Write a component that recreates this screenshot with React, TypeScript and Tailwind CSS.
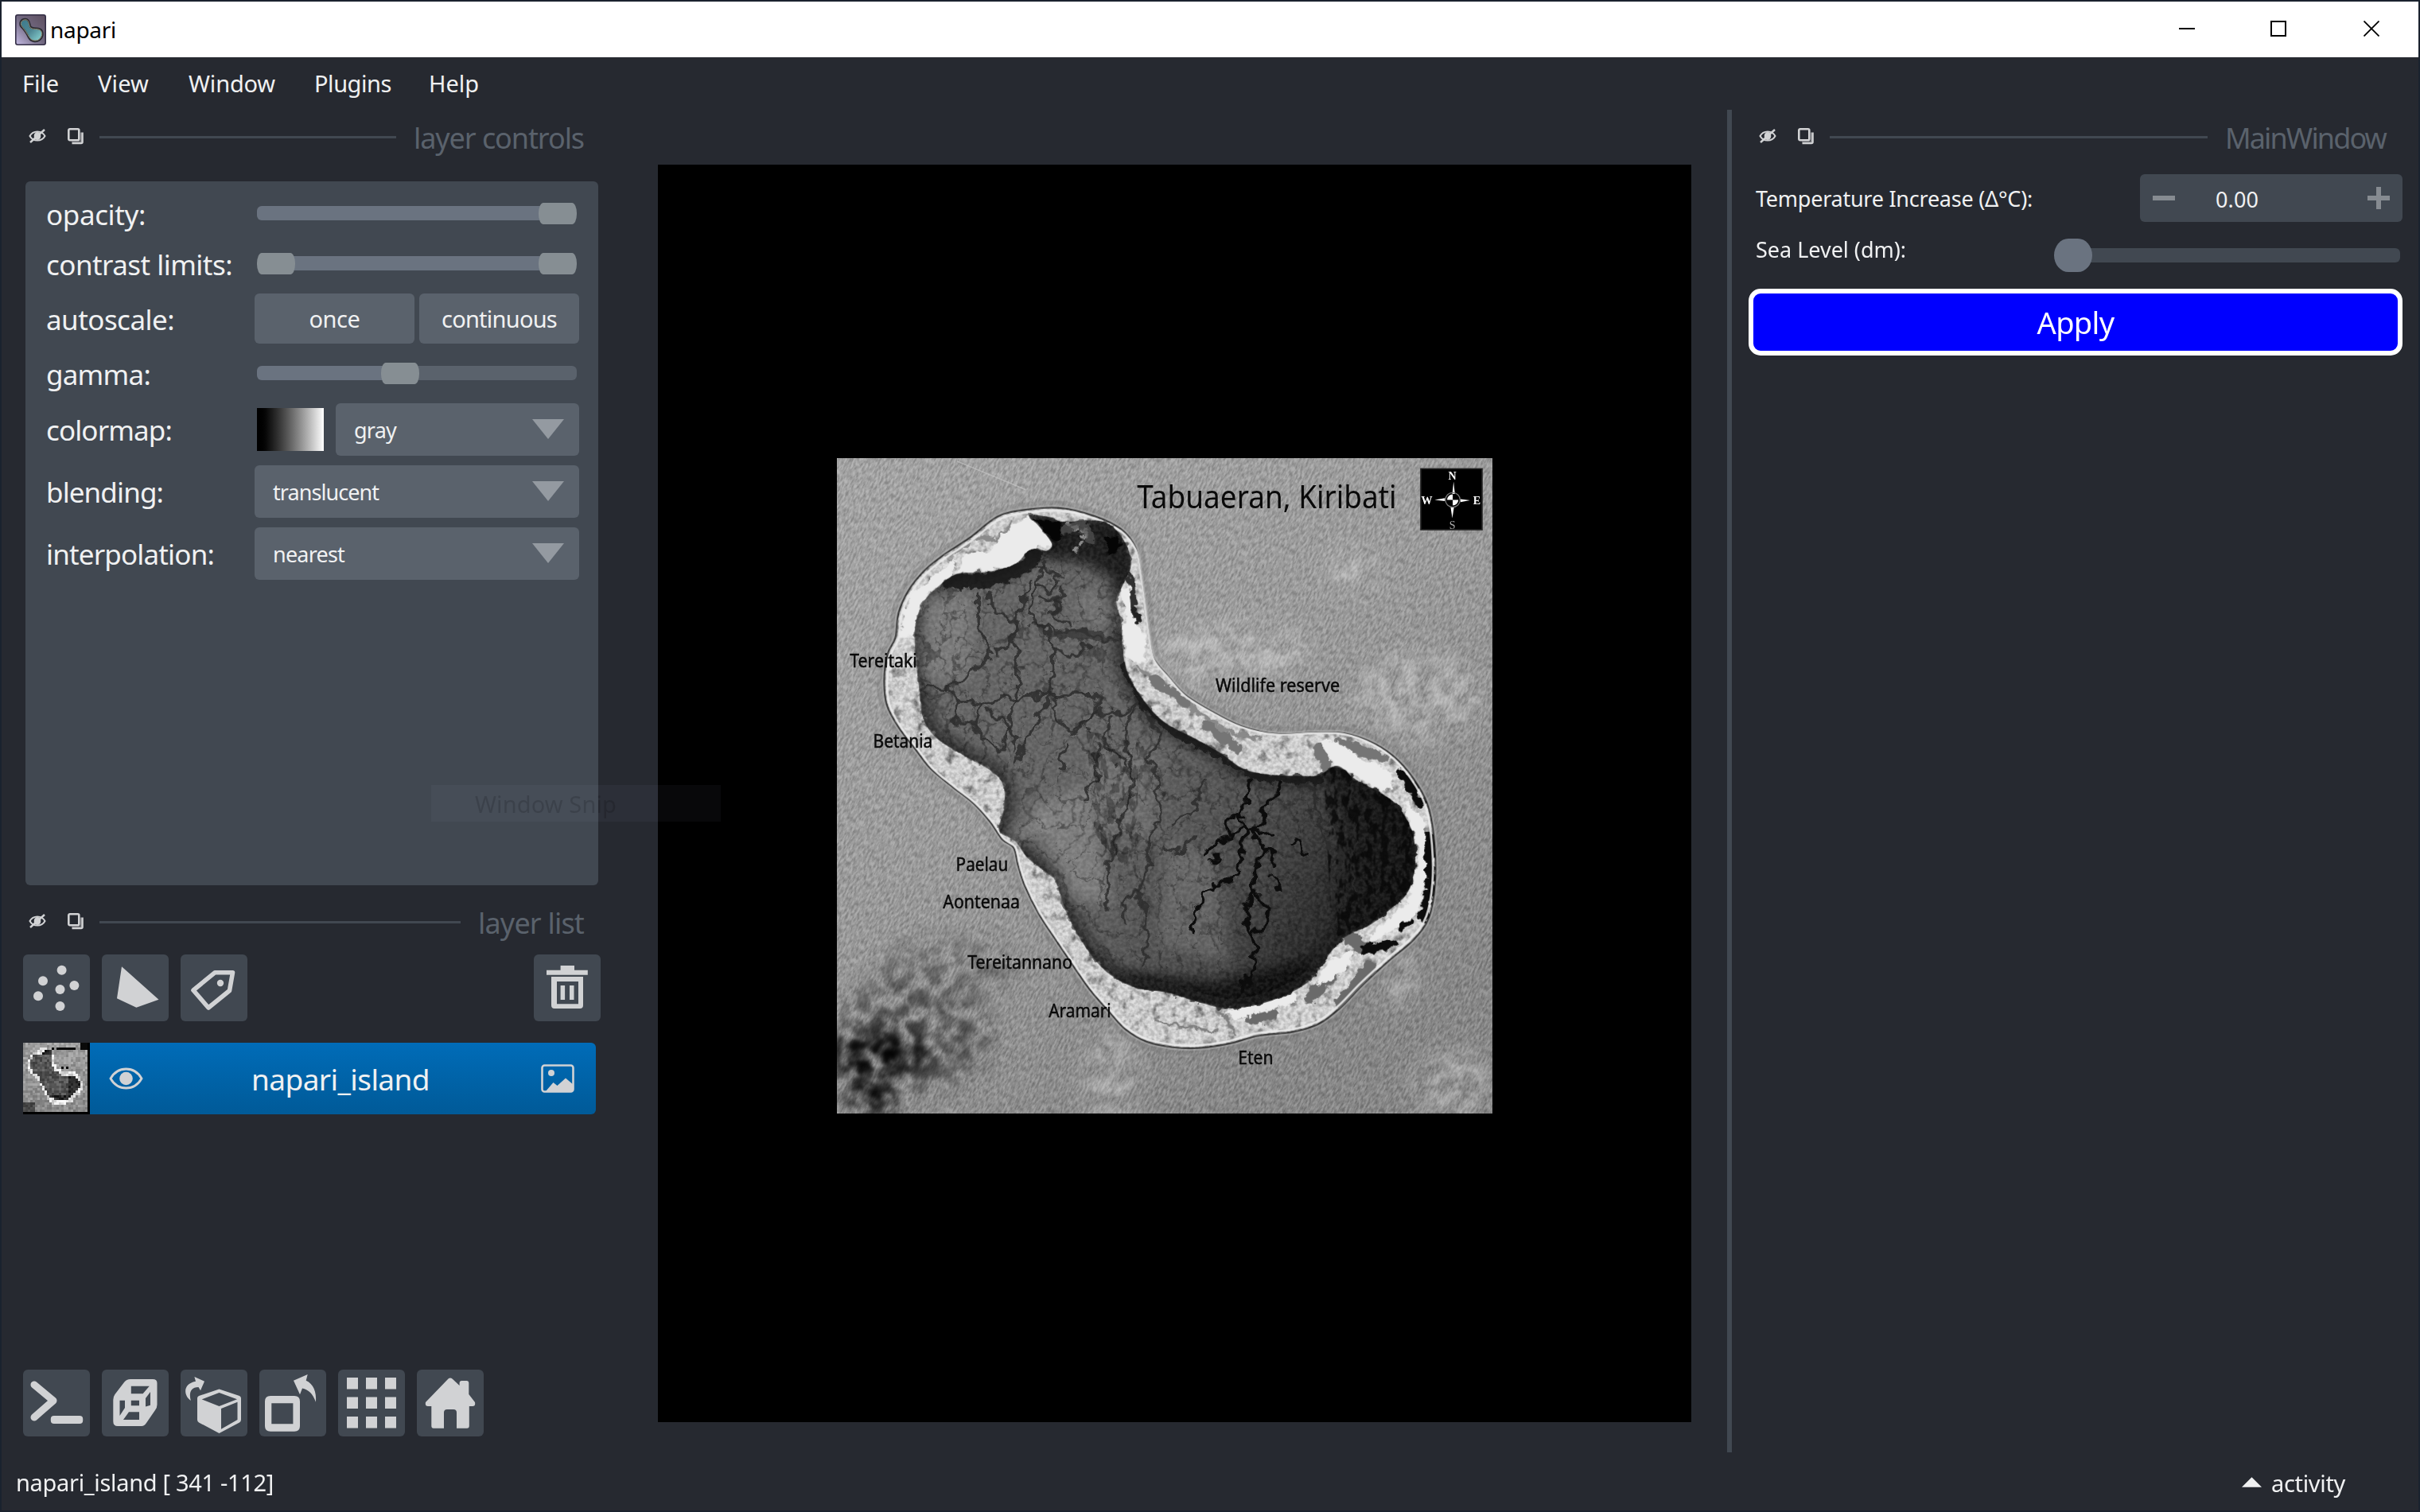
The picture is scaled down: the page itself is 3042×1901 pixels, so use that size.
import { useLayoutEffect, useRef, useState, type ReactNode } from "react";

type Pt = [number, number];

/** Text whose letter spacing is tuned so that the run fills the given width. */
function FitText({ children, width, className = "" }: { children: string; width: number; className?: string }) {
  const ref = useRef<HTMLSpanElement>(null);
  const [spacing, setSpacing] = useState(0);
  useLayoutEffect(() => {
    const natural = ref.current?.getBoundingClientRect().width ?? width;
    setSpacing((width - natural) / children.length);
  }, [children, width]);
  return (
    <span ref={ref} className={"inline-block whitespace-pre " + className} style={{ letterSpacing: spacing }}>
      {children}
    </span>
  );
}

/** Closed Catmull-Rom spline through the points. */
function smooth(pts: Pt[]): string {
  const n = pts.length;
  let d = `M${pts[0][0]} ${pts[0][1]}`;
  for (let i = 0; i < n; i++) {
    const p0 = pts[(i - 1 + n) % n];
    const p1 = pts[i];
    const p2 = pts[(i + 1) % n];
    const p3 = pts[(i + 2) % n];
    d += `C${p1[0] + (p2[0] - p0[0]) / 6} ${p1[1] + (p2[1] - p0[1]) / 6} ${p2[0] - (p3[0] - p1[0]) / 6} ${p2[1] - (p3[1] - p1[1]) / 6} ${p2[0]} ${p2[1]}`;
  }
  return d + "Z";
}

function inside(x: number, y: number, poly: Pt[]): boolean {
  let hit = false;
  for (let i = 0, j = poly.length - 1; i < poly.length; j = i++) {
    const [xi, yi] = poly[i];
    const [xj, yj] = poly[j];
    if (yi > y !== yj > y && x < ((xj - xi) * (y - yi)) / (yj - yi) + xi) hit = !hit;
  }
  return hit;
}

const COAST: Pt[] = [
  [460, 132], [395, 148], [330, 198], [270, 238], [225, 275], [188, 322], [165, 375], [158, 432], [140, 470],
  [132, 530], [138, 590], [165, 642], [205, 695], [240, 740], [290, 782], [340, 822], [378, 865], [405, 905],
  [432, 925], [442, 965], [458, 1015], [490, 1080], [530, 1142], [570, 1202], [610, 1260], [655, 1312],
  [692, 1352], [740, 1380], [800, 1393], [860, 1395], [930, 1385], [1000, 1366], [1080, 1357], [1140, 1338],
  [1190, 1300], [1240, 1248], [1300, 1192], [1360, 1140], [1395, 1088], [1409, 1010], [1408, 920], [1395, 835],
  [1370, 780], [1325, 722], [1270, 682], [1200, 657], [1130, 655], [1040, 658], [960, 640], [890, 605],
  [830, 567], [790, 523], [756, 480], [744, 420], [735, 350], [724, 270], [714, 220], [680, 177], [620, 147], [540, 128],
];

const LAGOON: Pt[] = [
  [203, 410], [222, 350], [262, 308], [305, 282], [370, 278], [435, 260], [470, 226], [510, 228], [520, 210],
  [490, 170], [468, 145], [520, 150], [545, 160], [640, 160], [688, 205], [704, 262], [682, 315], [670, 345],
  [682, 400], [684, 450], [696, 515], [730, 575], [780, 630], [850, 668], [910, 702], [960, 738], [1010, 752],
  [1090, 757], [1140, 755], [1182, 733], [1225, 765], [1285, 798], [1325, 830], [1358, 895], [1362, 970],
  [1345, 1030], [1310, 1065], [1260, 1105], [1200, 1135], [1160, 1180], [1125, 1230], [1080, 1262], [1010, 1290],
  [930, 1302], [860, 1287], [790, 1265], [720, 1255], [660, 1226], [618, 1185], [578, 1125], [550, 1065],
  [530, 1005], [510, 985], [465, 950], [436, 910], [398, 885], [410, 835], [408, 780], [380, 745], [310, 705],
  [250, 665], [222, 620], [214, 560], [206, 490],
];

const SOFT_CRACKS = [
  "M235 545 L270 548 L290 552 L300 580 L355 590 L390 578 L440 575 L515 565 L630 568 L620 610 L595 640 L575 655",
  "M350 330 L352 410 L375 460 L365 490 L330 520 L275 550",
  "M376 325 L385 370 L412 385 L430 400 L425 440 L385 480",
  "M300 585 L290 625 L340 640 L355 590 M340 640 L400 700 L420 640 L375 600",
  "M470 300 L455 340 L440 380 L430 430 L445 500 L440 560 L420 640 L440 690",
  "M500 260 L485 310 L470 380 L500 410 L520 450 L525 520 L515 570 L480 640 L455 690 L440 730",
  "M475 270 L500 265 L540 290 L520 320 L485 310",
  "M500 340 L530 335 L535 370 L505 380",
  "M475 395 L530 420 L575 410 L620 430 L680 440",
  "M545 320 L520 370 L560 400",
  "M525 460 L570 480 L600 450",
  "M530 565 L520 600 L560 650 L600 640 L620 605 L690 610 L720 590",
  "M700 520 L720 590 L690 640 L695 700 L715 770 L690 830 L670 900 L650 980 L650 1070",
  "M630 690 L620 760 L600 810",
  "M660 620 L640 680 L690 730",
  "M740 610 L775 660 L745 710 L770 780 L770 850 L745 900 L745 960 L720 1030 L685 1050 L690 1100",
  "M720 1030 L740 1090 L735 1200",
  "M555 680 L540 740",
  "M870 760 L850 830 L800 870",
  "M780 930 L820 935 L850 900",
  "M1100 775 L1135 800 L1140 870 L1170 940 L1160 1010 L1185 1060 L1180 1110",
  "M1180 780 L1170 860 L1200 930 L1190 1000 L1210 1080",
  "M1210 790 L1230 870 L1215 960 L1225 1030",
];

const HARD_CRACKS = [
  "M980 765 L968 830 L950 850 L970 890 L960 950 L945 990 L915 1005 L880 1030 L855 1075 L848 1125",
  "M1050 765 L1045 800 L1020 820 L1005 870 L985 890 L1015 920 L1000 950 L990 990 L988 1040 L970 1060 L980 1130 L990 1160 L985 1215 L960 1265",
  "M988 1040 L1022 1060 L1020 1095 L985 1135",
  "M968 845 L945 845 L920 880 L945 890 L900 915 L870 940",
  "M985 880 L950 890 M985 890 L1030 885 M1015 915 L1040 960",
  "M1075 910 L1090 910 L1105 935",
  "M1035 1000 L1055 1030",
  "M895 960 L905 945",
];

const PLACES: { name: string; x: number; y: number; w: number }[] = [
  { name: "Wildlife reserve", x: 901, y: 560, w: 288 },
  { name: "Tereitaki", x: 53, y: 502, w: 156 },
  { name: "Betania", x: 107, y: 690, w: 138 },
  { name: "Paelau", x: 299, y: 980, w: 121 },
  { name: "Aontenaa", x: 269, y: 1068, w: 178 },
  { name: "Tereitannano", x: 326, y: 1210, w: 243 },
  { name: "Aramari", x: 514, y: 1323, w: 145 },
  { name: "Eten", x: 953, y: 1433, w: 82 },
];

function IslandMap() {
  const coast = smooth(COAST);
  const lagoon = smooth(LAGOON);
  return (
    <svg className="h-[824px] w-[824px]" viewBox="22 11 1520 1538" preserveAspectRatio="none">
      <defs>
        <linearGradient id="sea" x1="0" y1="0" x2="0.6" y2="1">
          <stop offset="0" stopColor="#a6a6a6" />
          <stop offset="0.5" stopColor="#9b9b9b" />
          <stop offset="1" stopColor="#848484" />
        </linearGradient>
        <linearGradient id="water" x1="0" y1="0" x2="1" y2="0.5">
          <stop offset="0" stopColor="#666666" />
          <stop offset="0.55" stopColor="#656565" />
          <stop offset="0.8" stopColor="#4c4c4c" />
          <stop offset="1" stopColor="#262626" />
        </linearGradient>
        <filter id="waves" x="0" y="0" width="1" height="1" colorInterpolationFilters="sRGB">
          <feTurbulence type="fractalNoise" baseFrequency="0.22 0.08" numOctaves="3" seed="4" />
          <feColorMatrix values="2.2 0 0 0 -0.52  2.2 0 0 0 -0.52  2.2 0 0 0 -0.52  0 0 0 0 0.17" />
        </filter>
        <filter id="mottle" x="0" y="0" width="1" height="1" colorInterpolationFilters="sRGB">
          <feTurbulence type="fractalNoise" baseFrequency="0.04" numOctaves="5" seed="9" />
          <feColorMatrix values="0 0 0 0 0.45  0 0 0 0 0.45  0 0 0 0 0.45  3.5 0 0 0 -1.85" />
          <feComposite in2="SourceGraphic" operator="in" />
        </filter>
        <filter id="veins" x="0" y="0" width="1" height="1" colorInterpolationFilters="sRGB">
          <feTurbulence type="turbulence" baseFrequency="0.022 0.016" numOctaves="1" seed="23" />
          <feColorMatrix values="0 0 0 0 0.1  0 0 0 0 0.1  0 0 0 0 0.1  -18 0 0 0 1" result="v" />
          <feTurbulence type="fractalNoise" baseFrequency="0.06" numOctaves="2" seed="3" result="n" />
          <feDisplacementMap in="v" in2="n" scale="22" xChannelSelector="R" yChannelSelector="G" />
        </filter>
        <filter id="grain" x="0" y="0" width="1" height="1" colorInterpolationFilters="sRGB">
          <feTurbulence type="fractalNoise" baseFrequency="0.12" numOctaves="3" seed="2" />
          <feColorMatrix values="3 0 0 0 -1  3 0 0 0 -1  3 0 0 0 -1  0 0 0 0 0.14" />
        </filter>
        <filter id="specks" x="0" y="0" width="1" height="1" colorInterpolationFilters="sRGB">
          <feTurbulence type="fractalNoise" baseFrequency="0.06 0.03" numOctaves="3" seed="31" />
          <feColorMatrix values="0 0 0 0 0.03  0 0 0 0 0.03  0 0 0 0 0.03  10 0 0 0 -5" />
          <feComposite in2="SourceGraphic" operator="in" />
        </filter>
        <filter id="cloud" x="-0.4" y="-0.4" width="1.8" height="1.8" colorInterpolationFilters="sRGB">
          <feTurbulence type="fractalNoise" baseFrequency="0.03" numOctaves="4" seed="12" result="n" />
          <feColorMatrix in="n" values="0 0 0 0 0  0 0 0 0 0  0 0 0 0 0  4 0 0 0 -1.5" result="m" />
          <feGaussianBlur in="SourceGraphic" stdDeviation="26" result="b" />
          <feComposite in="b" in2="m" operator="in" result="c" />
          <feGaussianBlur in="c" stdDeviation="4" />
        </filter>
        <filter id="rough" x="-0.05" y="-0.05" width="1.1" height="1.1" colorInterpolationFilters="sRGB">
          <feTurbulence type="fractalNoise" baseFrequency="0.05" numOctaves="3" seed="7" />
          <feDisplacementMap in="SourceGraphic" scale="24" xChannelSelector="R" yChannelSelector="G" />
        </filter>
        <filter id="jagged" x="-0.05" y="-0.05" width="1.1" height="1.1" colorInterpolationFilters="sRGB">
          <feTurbulence type="fractalNoise" baseFrequency="0.04" numOctaves="2" seed="17" />
          <feDisplacementMap in="SourceGraphic" scale="40" xChannelSelector="R" yChannelSelector="G" />
          <feGaussianBlur stdDeviation="1.2" />
        </filter>
        <filter id="soft"><feGaussianBlur stdDeviation="14" /></filter>
        <clipPath id="land"><path d={coast} /></clipPath>
        <clipPath id="pool"><path d={lagoon} /></clipPath>
      </defs>

      <rect x="22" y="11" width="1520" height="1538" fill="url(#sea)" />
      <g transform="rotate(25 780 780)">
        <rect x="-400" y="-400" width="2400" height="2400" filter="url(#waves)" />
      </g>
      <g fill="#fff" opacity="0.3" filter="url(#cloud)">
        <ellipse cx="930" cy="470" rx="190" ry="70" />
        <ellipse cx="1370" cy="570" rx="150" ry="100" />
        <ellipse cx="1220" cy="270" rx="60" ry="45" />
        <ellipse cx="660" cy="1470" rx="60" ry="110" />
        <ellipse cx="1450" cy="1480" rx="90" ry="80" />
        <ellipse cx="1330" cy="1230" rx="40" ry="80" />
      </g>
      <g fill="#222" opacity="0.6" filter="url(#cloud)">
        <ellipse cx="190" cy="1370" rx="190" ry="130" />
        <ellipse cx="270" cy="1210" rx="160" ry="70" opacity="0.6" />
      </g>
      <g fill="#000" filter="url(#soft)">
        <ellipse cx="65" cy="1412" rx="22" ry="26" opacity="0.9" />
        <ellipse cx="165" cy="1405" rx="40" ry="18" opacity="0.8" />
        <ellipse cx="105" cy="1500" rx="30" ry="20" opacity="0.8" />
        <ellipse cx="125" cy="1365" rx="14" ry="22" opacity="0.7" />
      </g>
      <g fill="#000" filter="url(#cloud)">
        <ellipse cx="65" cy="1415" rx="60" ry="45" />
        <ellipse cx="165" cy="1405" rx="70" ry="45" />
        <ellipse cx="105" cy="1510" rx="65" ry="45" />
      </g>
      <path d="M300 18 L460 85" stroke="#c8c8c8" strokeWidth="3" opacity="0.6" />

      <path d={coast} fill="none" stroke="#777" strokeWidth="34" opacity="0.3" />
      <path d={coast} fill="none" stroke="#b5b5b5" strokeWidth="12" opacity="0.5" />
      <path d={coast} fill="#dcdcdc" stroke="#333" strokeWidth="4" />
      <g clipPath="url(#land)">
        <path d={coast} fill="#000" filter="url(#mottle)" />
        <rect x="100" y="100" width="1340" height="1320" filter="url(#grain)" />
        <g filter="url(#rough)" fill="none" strokeLinecap="round" strokeLinejoin="round">
          <path d="M280 240 L360 195 L390 205 L430 165 M720 500 L790 560 L880 620 L930 655 L1000 670" stroke="#8a8a8a" strokeWidth="9" />
          <path d="M755 530 L830 585 M880 640 L950 690 M1140 690 L1160 745 M1190 680 L1290 715" stroke="#757575" strokeWidth="24" />
          <path d="M1120 1275 L1170 1225 M1190 1290 L1260 1205 M1210 1140 L1250 1160 M980 1325 L1030 1320" stroke="#6a6a6a" strokeWidth="28" />
          <path d="M700 280 L715 385" stroke="#303030" strokeWidth="12" />
          <path d="M712 375 L714 390" stroke="#222" strokeWidth="28" />
          <path d="M905 1300 L945 1360 M760 1330 L840 1350 L900 1355" stroke="#808080" strokeWidth="7" />
          <path d="M1395 900 L1398 1020 L1380 1090" stroke="#0c0c0c" strokeWidth="22" />
          <path d="M1330 1110 L1350 1100 M1330 745 L1375 820 M1245 1165 L1310 1150" stroke="#0c0c0c" strokeWidth="20" />
        </g>
        <g filter="url(#rough)" fill="#ebebeb">
          <path d="M205 430 L165 430 L190 330 L300 245 L290 285 L230 330Z" />
          <path d="M300 280 L310 240 L380 225 L400 195 L470 145 L520 215 L480 225 L440 260 L370 275Z" />
          <path d="M680 310 L700 315 L712 400 L740 430 L735 485 L705 495 L685 450 L690 390Z" />
          <path d="M1140 670 L1190 680 L1240 720 L1305 745 L1310 780 L1285 795 L1220 755 L1160 715Z" />
          <path d="M1335 815 L1385 860 L1388 1000 L1365 1085 L1260 1150 L1255 1130 L1350 1050 L1372 930Z" />
          <path d="M1130 1250 L1165 1190 L1220 1165 L1210 1200 L1140 1255Z" />
          <path d="M920 1310 L1080 1265 L1090 1285 L950 1330Z" />
        </g>
      </g>
      <path d={coast} fill="none" stroke="#eaeaea" strokeWidth="5" opacity="0.9" transform="translate(8 8) scale(0.99)" />

      <g filter="url(#rough)">
        <path d={lagoon} fill="url(#water)" />
      </g>
      <g clipPath="url(#pool)">
        <g filter="url(#soft)">
          <path d={lagoon} fill="none" stroke="#111" strokeWidth="44" opacity="0.7" />
          <path d="M225 340 L340 330 L330 530 L225 530Z" fill="#7e7e7e" opacity="0.9" />
          <path d="M570 340 L640 320 L670 400 L600 400Z" fill="#787878" opacity="0.8" />
          <path d="M470 830 L600 780 L660 1060 L570 1040Z" fill="#8a8a8a" opacity="0.7" />
          <path d="M600 700 L760 700 L760 900 L620 900Z" fill="#767676" opacity="0.6" />
          <path d="M790 900 L900 950 L930 1200 L770 1150Z" fill="#747474" opacity="0.6" />
          <path d="M1150 740 L1380 800 L1370 1040 L1180 1130 L1200 900Z" fill="#0c0c0c" opacity="0.75" />
          <path d="M480 150 L690 170 L700 320 L600 260 L500 240Z" fill="#080808" opacity="0.85" />
          <path d="M600 1200 L900 1240 L1130 1180 L1060 1300 L800 1300Z" fill="#080808" opacity="0.7" />
          <path d="M430 900 L520 860" stroke="#aaa" strokeWidth="16" opacity="0.7" />
        </g>
        <rect x="180" y="120" width="1240" height="1200" filter="url(#veins)" opacity="0.38" />
        <rect x="180" y="120" width="1240" height="1200" filter="url(#grain)" opacity="0.5" />
        <g filter="url(#jagged)" fill="none" strokeLinejoin="round" strokeLinecap="round">
          {SOFT_CRACKS.map((d) => (
            <path key={d} d={d} stroke="#2b2b2b" strokeWidth="8" opacity="0.85" />
          ))}
          {HARD_CRACKS.map((d) => (
            <path key={d} d={d} stroke="#0c0c0c" strokeWidth="9" />
          ))}
        </g>
        <g filter="url(#rough)" fill="none" strokeLinejoin="round" strokeLinecap="round">
          <path d="M520 425 L600 425 L640 430" stroke="#333" strokeWidth="22" opacity="0.7" />
          <path d="M690 500 L740 590 L800 650 L900 700 L1000 760 L1140 765" stroke="#161616" strokeWidth="22" opacity="0.8" />
          <path d="M280 300 L370 300 L440 275 L480 240" stroke="#161616" strokeWidth="34" opacity="0.85" />
          <path d="M475 150 L540 165 L545 200 L520 200Z M640 190 L690 210 L650 240Z" fill="#050505" />
          <path d="M560 165 L600 185 L590 210 L570 235" stroke="#8a8a8a" strokeWidth="12" strokeDasharray="3 15" />
          <path d="M550 180 L590 160 L610 200" stroke="#555" strokeWidth="20" opacity="0.7" />
        </g>
        <path d="M1150 730 L1360 790 L1360 1050 L1170 1140Z" filter="url(#specks)" opacity="0.8" />
        <path d="M600 650 L720 680 L720 1000 L620 900Z" filter="url(#specks)" opacity="0.3" />
      </g>

      <g fontFamily="'Noto Sans', sans-serif" fill="#0a0a0a">
        <text x="718" y="129" fontSize="74" textLength="602" lengthAdjust="spacingAndGlyphs">Tabuaeran, Kiribati</text>
        {PLACES.map((p) => (
          <text key={p.name} x={p.x - 1} y={p.y} fontSize="43" stroke="#0a0a0a" strokeWidth="0.9" textLength={p.w} lengthAdjust="spacingAndGlyphs">
            {p.name}
          </text>
        ))}
      </g>

      <rect x="1376" y="36" width="142" height="143" fill="#000" stroke="#222" strokeWidth="3" />
      <g fill="#fff" fontFamily="'Liberation Serif', serif" fontSize="26" fontWeight="700" textAnchor="middle">
        <text x="1449" y="61">N</text>
        <text x="1390" y="119">W</text>
        <text x="1506" y="119">E</text>
        <text x="1449" y="177" fill="#aaa" fontWeight="400">S</text>
        <path d="M1452 66 L1455 95 L1449 95Z M1449 152 L1453 126 L1445 126Z M1408 109 L1432 105 L1432 112Z M1490 110 L1468 107 L1468 114Z" />
        <circle cx="1450" cy="109" r="17" fill="none" stroke="#777" strokeWidth="2.5" />
        <path d="M1450 109 V96 A13 13 0 0 0 1437 109Z M1450 109 V122 A13 13 0 0 0 1463 109Z" />
      </g>
    </svg>
  );
}

/** Coarse pixel preview of the map layer. */
function Thumbnail() {
  const cells: ReactNode[] = [];
  for (let r = 0; r < 29; r++) {
    for (let c = 0; c < 27; c++) {
      const x = 22 + ((c + 0.5) / 27) * 1520;
      const y = 11 + ((r + 0.5) / 29) * 1538;
      const s = Math.sin(c * 12.9898 + r * 78.233) * 43758.5453;
      const n = s - Math.floor(s);
      let v = 135 + n * 45 - (r / 29) * 20;
      if (inside(x, y, LAGOON)) v = (x > 1100 || y < 290 || y > 1180 ? 15 : 60) + n * 50;
      else if (inside(x, y, COAST)) v = 190 + n * 65;
      if (x < 330 && y > 1340) v -= 70;
      if (x > 1370 && y < 185) v = 10;
      if (r === 2 && c >= 12 && c < 24 && n > 0.4) v = 10;
      if (r === 10 && (c === 16 || c === 18)) v = 10;
      const g = Math.round(v);
      cells.push(<rect key={`${r}-${c}`} x={c * 3} y={r * 3} width={3} height={3} fill={`rgb(${g},${g},${g})`} />);
    }
  }
  return (
    <div className="h-[90px] w-[84px] bg-black">
      <svg className="h-[87px] w-[81px]" viewBox="0 0 81 87" shapeRendering="crispEdges">{cells}</svg>
    </div>
  );
}

function DockHeader({ title, width, className = "" }: { title: string; width: number; className?: string }) {
  return (
    <div className={"flex h-[69px] items-center " + className}>
      <svg className="-mt-[3px] h-[18px] w-[22px] shrink-0" viewBox="0 0 22 18" fill="none" stroke="#d1d2d4">
        <path d="M1.5 9 C5.5 1.6 16.5 1.6 20.5 9 C16.5 16.4 5.5 16.4 1.5 9Z" strokeWidth="2" />
        <ellipse cx="11" cy="9" rx="4.3" ry="5" fill="#d1d2d4" stroke="none" />
        <path d="M2 17 L20 1" strokeWidth="2.4" />
      </svg>
      <svg className="-mt-[3px] ml-[26px] h-[22px] w-[22px] shrink-0" viewBox="0 0 22 22" fill="none" stroke="#d1d2d4">
        <rect x="2.3" y="2.3" width="13" height="14" rx="1.5" strokeWidth="2.6" />
        <path d="M19.5 6.5 V18.5 Q19.5 20 18 20 H6.5" strokeWidth="2.6" />
        <path d="M17.5 6.5 V18 H6" strokeWidth="1.2" opacity="0.5" />
      </svg>
      <div className="ml-[19px] h-[3px] flex-1 bg-[#414851]" />
      <FitText width={width} className="ml-[22px] mr-0.5 mt-[3px] text-[36px] text-[#5a626c]">{title}</FitText>
    </div>
  );
}

function Row({ label, width, height, children }: { label: string; width: number; height: string; children: ReactNode }) {
  return (
    <div className={"flex items-center pl-[26px] pr-6 " + height}>
      <div className="mt-[3px] w-[262px] shrink-0">
        <FitText width={width} className="text-[35px]">{label}</FitText>
      </div>
      <div className="flex flex-1 items-center">{children}</div>
    </div>
  );
}

const Thumb = () => <div className="h-[27px] w-12 shrink-0 rounded-[6px/13px] bg-[#868e93]" />;

/** Slider of fixed width whose empty and filled track pieces sit between its thumbs. */
function Slider({ kind }: { kind: "full" | "range" | "middle" }) {
  return (
    <div className="-mt-px ml-[3px] flex w-[402px] items-center">
      {kind === "range" ? <div className="z-10"><Thumb /></div> : null}
      <div
        className={
          "-mx-1 h-[18px] bg-[#6a7380] first:ml-0 first:rounded-l-md " + (kind === "middle" ? "w-[160px]" : "flex-1")
        }
      />
      <div className="z-10"><Thumb /></div>
      {kind === "middle" ? <div className="-ml-1 h-[18px] flex-1 rounded-r-md bg-[#5a626c]" /> : null}
    </div>
  );
}

function Select({ value, width }: { value: string; width: number }) {
  return (
    <div className="flex h-[66px] flex-1 items-center justify-between rounded-md bg-[#5a626c] pl-[23px] pr-[19px]">
      <FitText width={width} className="mt-0.5 text-[27px]">{value}</FitText>
      <svg className="-mt-px h-[25px] w-10" viewBox="0 0 40 25"><path d="M0 0H40L20 25Z" fill="#949aa1" /></svg>
    </div>
  );
}

function IconButton({ children }: { children: ReactNode }) {
  return (
    <button className="size-[84px] shrink-0 rounded-md bg-[#414851]">
      <svg className="size-[84px]" viewBox="0 0 84 84" fill="#d1d2d4">{children}</svg>
    </button>
  );
}

function LeftDock() {
  return (
    <aside className="flex w-[825px] shrink-0 flex-col pl-[27px]">
      <DockHeader title="layer controls" width={214} className="ml-[7px] w-[700px]" />
      <section className="ml-[3px] mt-[21px] h-[885px] w-[720px] rounded-md bg-[#414851] pt-[9px]">
        <Row label="opacity:" width={125} height="h-[63px]"><Slider kind="full" /></Row>
        <Row label="contrast limits:" width={234} height="h-[63px]"><Slider kind="range" /></Row>
        <Row label="autoscale:" width={161} height="h-[75px]">
          <button className="mr-1.5 h-[63px] flex-1 rounded-md bg-[#5a626c] text-[29px]"><FitText width={64}>once</FitText></button>
          <button className="h-[63px] flex-1 rounded-md bg-[#5a626c] text-[29px]"><FitText width={145}>continuous</FitText></button>
        </Row>
        <Row label="gamma:" width={131} height="h-[63px]"><Slider kind="middle" /></Row>
        <Row label="colormap:" width={158} height="h-[78px]">
          <div className="ml-[3px] mr-[15px] h-[54px] w-[84px] bg-linear-to-r from-black to-white" />
          <Select value="gray" width={53} />
        </Row>
        <Row label="blending:" width={147} height="h-[78px]"><Select value="translucent" width={133} /></Row>
        <Row label="interpolation:" width={211} height="h-[78px]"><Select value="nearest" width={90} /></Row>
      </section>

      <DockHeader title="layer list" width={133} className="ml-[7px] mt-3 w-[700px]" />
      <div className="mt-1.5 flex w-[726px] gap-[15px]">
        <IconButton>
          <circle cx="48.6" cy="19.7" r="6" /><circle cx="25" cy="33.3" r="6" /><circle cx="64.4" cy="39" r="6" />
          <circle cx="46.5" cy="44" r="6" /><circle cx="19" cy="52.3" r="6" /><circle cx="46.5" cy="65" r="6" />
        </IconButton>
        <IconButton><path d="M25 15.3 L71.5 56.7 L43.4 66.7 L19 55.3Z" /></IconButton>
        <IconButton>
          <path d="M43 22.8 L65.5 22.8 L61.5 45.5 L35 67 L16 45Z" fill="none" stroke="#d1d2d4" strokeWidth="5.6" strokeLinejoin="round" />
          <circle cx="50" cy="36" r="4.2" />
        </IconButton>
        <div className="flex-1" />
        <IconButton>
          <path d="M16 19.7 H33.6 V14 H51 V19.7 H67.8 V25.7 H16Z" />
          <path fillRule="evenodd" d="M22 28 H62 V64 Q62 68 58 68 H26 Q22 68 22 64Z M29 34 V62.3 H56 V34Z" />
          <path d="M33.6 39 h5.5 v18 h-5.5Z M45 39 h5.5 v18 h-5.5Z" />
        </IconButton>
      </div>
      <div className="mt-[27px] flex h-[90px] w-[720px] items-center rounded-r-md bg-linear-to-b from-[#006cb8] to-[#005a98]">
        <Thumbnail />
        <svg className="ml-6 h-7 w-[43px]" viewBox="0 0 43 28">
          <path d="M2 14 C11 -2 32 -2 41 14 C32 30 11 30 2 14Z" fill="none" stroke="#d1d2d4" strokeWidth="2.8" />
          <circle cx="21.5" cy="14" r="8.3" fill="#d1d2d4" />
        </svg>
        <div className="-ml-1 flex flex-1 justify-center"><FitText width={224} className="mt-0.5 text-[37px]">napari_island</FitText></div>
        <svg className="mr-[27px] h-9 w-[42px]" viewBox="0 0 42 36">
          <rect x="1.5" y="1.5" width="39" height="33" rx="3" fill="none" stroke="#d1d2d4" strokeWidth="2.6" />
          <circle cx="13" cy="11" r="4" fill="#d1d2d4" />
          <path d="M6 34 L15.5 23 L20.5 27 L31 17.5 L41 26 V34Z" fill="#d1d2d4" />
        </svg>
      </div>

      <div className="mb-5 mt-auto flex gap-[15px]">
        <IconButton>
          <path d="M14 19 L38 39 L14 60" fill="none" stroke="#d1d2d4" strokeWidth="9" strokeLinecap="round" strokeLinejoin="round" />
          <rect x="34.8" y="58" width="40.4" height="10" rx="4" />
        </IconButton>
        <IconButton>
          <path
            fillRule="evenodd"
            d="M36 12 H64 Q69.500 12 69.500 17 V44 Q69.500 48 67 51 L56 67 Q53.500 71 50 71 H20 Q14.300 71 14.300 65 V38 Q14.300 34 16.500 31 L28 16 Q31 12 36 12Z M36.800 20.700 V30.300 H51.600 L59.800 20.700Z M22.500 38.700 V58 L29 48 V38.700Z M36.800 38.700 V45.300 H47 V38.700Z M61 28 L55 36 V46.500 L61 44.700Z M34 53.300 L27 63 H47 V53.300Z"
          />
        </IconButton>
        <IconButton>
          <path
            fillRule="evenodd"
            d="M48.500 24.500 L74 33 Q76 34 76 36 V63 Q76 65 74 66.500 L48.500 80 L23 66.500 Q21 65 21 63 V36 Q21 34 23 33Z M26.600 37.300 L48.500 46 L71 37.300 L48.500 29Z M51 49 V74.700 L71.500 63 V40.700Z"
          />
          <path d="M12.800 39 C4 33 2 18 19 14.700 L17.400 9 L30 14.700 L25 26.300 L22.500 22 C12 22 10.500 30 12.800 39Z" />
        </IconButton>
        <IconButton>
          <path fillRule="evenodd" d="M14 33 H44 Q51 33 51 40 V71 Q51 77.700 44 77.700 H14 Q7 77.700 7 71 V40 Q7 33 14 33Z M15.300 42.300 V68.300 H42.400 V42.300Z" />
          <path d="M43 13.700 L60.700 6 L58.700 13.700 C68 18 72 28 71 40.700 C67 30 62 25.500 54 23.500 L51 31.300Z" />
        </IconButton>
        <IconButton>
          <path d="M11 10h14v14.500H11zM35 10h14v14.500H35zM59 10h14v14.500H59zM11 34.500h14V49H11zM35 34.500h14V49H35zM59 34.500h14V49H59zM11 59h14v14.500H11zM35 59h14v14.500H35zM59 59h14v14.500H59z" />
        </IconButton>
        <IconButton>
          <path d="M39.500 11.500 Q42 9.500 44.500 11.500 L53.600 20 V17 Q53.600 14 56.500 14 H62.500 Q65.300 14 65.300 17 V31 L73 41 Q74 46 70 46 H65.800 V70.700 Q65.800 73.700 63 73.700 H50 V54 Q50 50 46 50 H38 Q34 50 34 54 V73.700 H21 Q18.300 73.700 18.300 70.700 V46 H14 Q10 46 11 41Z" />
        </IconButton>
      </div>
    </aside>
  );
}

function RightDock() {
  return (
    <aside className="flex flex-1 flex-col">
      <DockHeader title="MainWindow" width={202} className="ml-[34px] w-[790px]" />
      <div className="ml-[21px] w-[822px]">
        <div className="mt-3 flex h-[60px] items-center justify-between pl-[9px]">
          <FitText width={348} className="mt-[3px] text-[27px]">Temperature Increase (Δ°C):</FitText>
          <div className="flex h-[60px] w-[330px] items-center rounded-md bg-[#414851] px-4">
            <div className="h-1.5 w-7 bg-[#868b91]" />
            <FitText width={54} className="ml-[51px] mt-1 text-[27px]">0.00</FitText>
            <svg className="ml-auto size-7" viewBox="0 0 28 28"><path d="M11 0h6v11h11v6H17v11h-6V17H0v-6h11z" fill="#868b91" /></svg>
          </div>
        </div>
        <div className="mt-[21px] flex h-[42px] items-center justify-between pl-[9px]">
          <FitText width={189} className="-mt-[13px] text-[27px]">Sea Level (dm):</FitText>
          <div className="mr-[3px] flex w-[435px] items-center">
            <div className="z-10 h-[42px] w-12 rounded-[18px/21px] bg-[#6a7380]" />
            <div className="-ml-2 h-[18px] flex-1 rounded-r-md bg-[#414851]" />
          </div>
        </div>
        <button className="mt-[21px] block h-[84px] w-full rounded-[15px] border-6 border-white bg-[#0000ff] text-[38px] leading-none text-white">
          <FitText width={97}>Apply</FitText>
        </button>
      </div>
    </aside>
  );
}

export default function App() {
  return (
    <div className="relative flex h-[1901px] w-[3042px] flex-col overflow-hidden border-2 border-[#1a222e] bg-[#262930] font-['Noto_Sans',sans-serif] text-[#f0f1f2]">
      <header className="flex h-[70px] shrink-0 items-center bg-white pl-[17px] text-black">
        <svg className="h-[39px] w-[39px]" viewBox="0 0 39 39">
          <defs>
            <linearGradient id="tile" x1="1" y1="0" x2="0" y2="1"><stop stopColor="#5d4f5f" /><stop offset="0.5" stopColor="#716880" /><stop offset="1" stopColor="#c4bbe4" /></linearGradient>
            <linearGradient id="blob" x1="0" y1="0" x2="1" y2="1"><stop stopColor="#3a7a8c" /><stop offset="0.5" stopColor="#4f8794" /><stop offset="1" stopColor="#8fdcd8" /></linearGradient>
          </defs>
          <rect x="0.800" y="0.800" width="37.400" height="37.400" rx="2.500" fill="url(#tile)" stroke="#332e45" strokeWidth="1.600" />
          <path d="M13 6 C18 6 18 12 19 15 C20 18 24 17.500 29 18 C36 19 35.500 27 32 31 C28 35.500 20 35 17 29 C14.500 24 12 20 9 17 C4 12 7 6 13 6Z" fill="url(#blob)" stroke="#292a33" strokeWidth="2.400" />
          <path d="M13 6.800 C17.500 6.800 17 12 18.500 15.500 C20 19 24 18 29 18.800 C35 20 34.500 27 31.500 30.300 C28 34.500 20.500 34 17.700 28.600 C15 24 12.500 20 9.500 16.500 C5.500 12 7.500 6.800 13 6.800Z" fill="none" stroke="#a9a07c" strokeWidth="0.800" />
        </svg>
        <FitText width={83} className="ml-[5px] text-[28px]">napari</FitText>
        <div className="ml-auto mr-[49px] flex items-center gap-[95px]">
          <div className="-mt-0.5 h-0.5 w-5 bg-black" />
          <div className="-mt-0.5 size-5 border-2 border-black" />
          <svg className="-mt-0.5 ml-0.5 size-5" viewBox="0 0 20 20"><path d="M0.500 0.500L19.500 19.500M19.500 0.500L0.500 19.500" stroke="#000" strokeWidth="1.800" /></svg>
        </div>
      </header>

      <nav className="flex h-[66px] shrink-0 items-center pl-[26px] text-[29px]">
        <FitText width={46} className="mr-[49px]">File</FitText>
        <FitText width={64} className="mr-[50px]">View</FitText>
        <FitText width={109} className="mr-[49px]">Window</FitText>
        <FitText width={97} className="mr-[47px]">Plugins</FitText>
        <FitText width={63}>Help</FitText>
      </nav>

      <main className="flex h-[1688px] shrink-0">
        <LeftDock />
        <section className="mt-[69px] h-[1581px] w-[1299px] shrink-0 bg-black pl-[225px] pt-[369px]">
          <IslandMap />
        </section>
        <div className="ml-[45px] h-full w-1.5 shrink-0 bg-[#414851]" />
        <RightDock />
      </main>

      <footer className="flex flex-1 items-center justify-between pl-[18px] pr-[92px] pt-[3px] text-[29px]">
        <FitText width={324}>napari_island [ 341 -112]</FitText>
        <div className="flex items-center">
          <svg className="-mt-0.5 mr-[12px] h-[13px] w-[25px]" viewBox="0 0 26 13"><path d="M0 13L13 0L26 13Z" fill="#f0f1f2" /></svg>
          <FitText width={93} className="mt-0.5">activity</FitText>
        </div>
      </footer>

      <div className="absolute -top-0.5 left-[62px] flex h-0.5 w-[1050px]">
        <div className="w-[61px] bg-[#6f6d6d]" />
        <div className="ml-[320px] w-[60px] bg-[#6f6d6d]" />
        <div className="ml-[130px] w-[60px] bg-[#6f6d6d]" />
        <div className="ml-auto w-[120px] bg-[#6f6d6d]" />
      </div>

      <div className="absolute left-[540px] top-[985px] flex h-[46px] w-[364px] items-center bg-[#c8d2fa]/4 pl-[55px] pt-0.5 text-[29px] text-black/15">
        <FitText width={178}>Window Snip</FitText>
      </div>
    </div>
  );
}
